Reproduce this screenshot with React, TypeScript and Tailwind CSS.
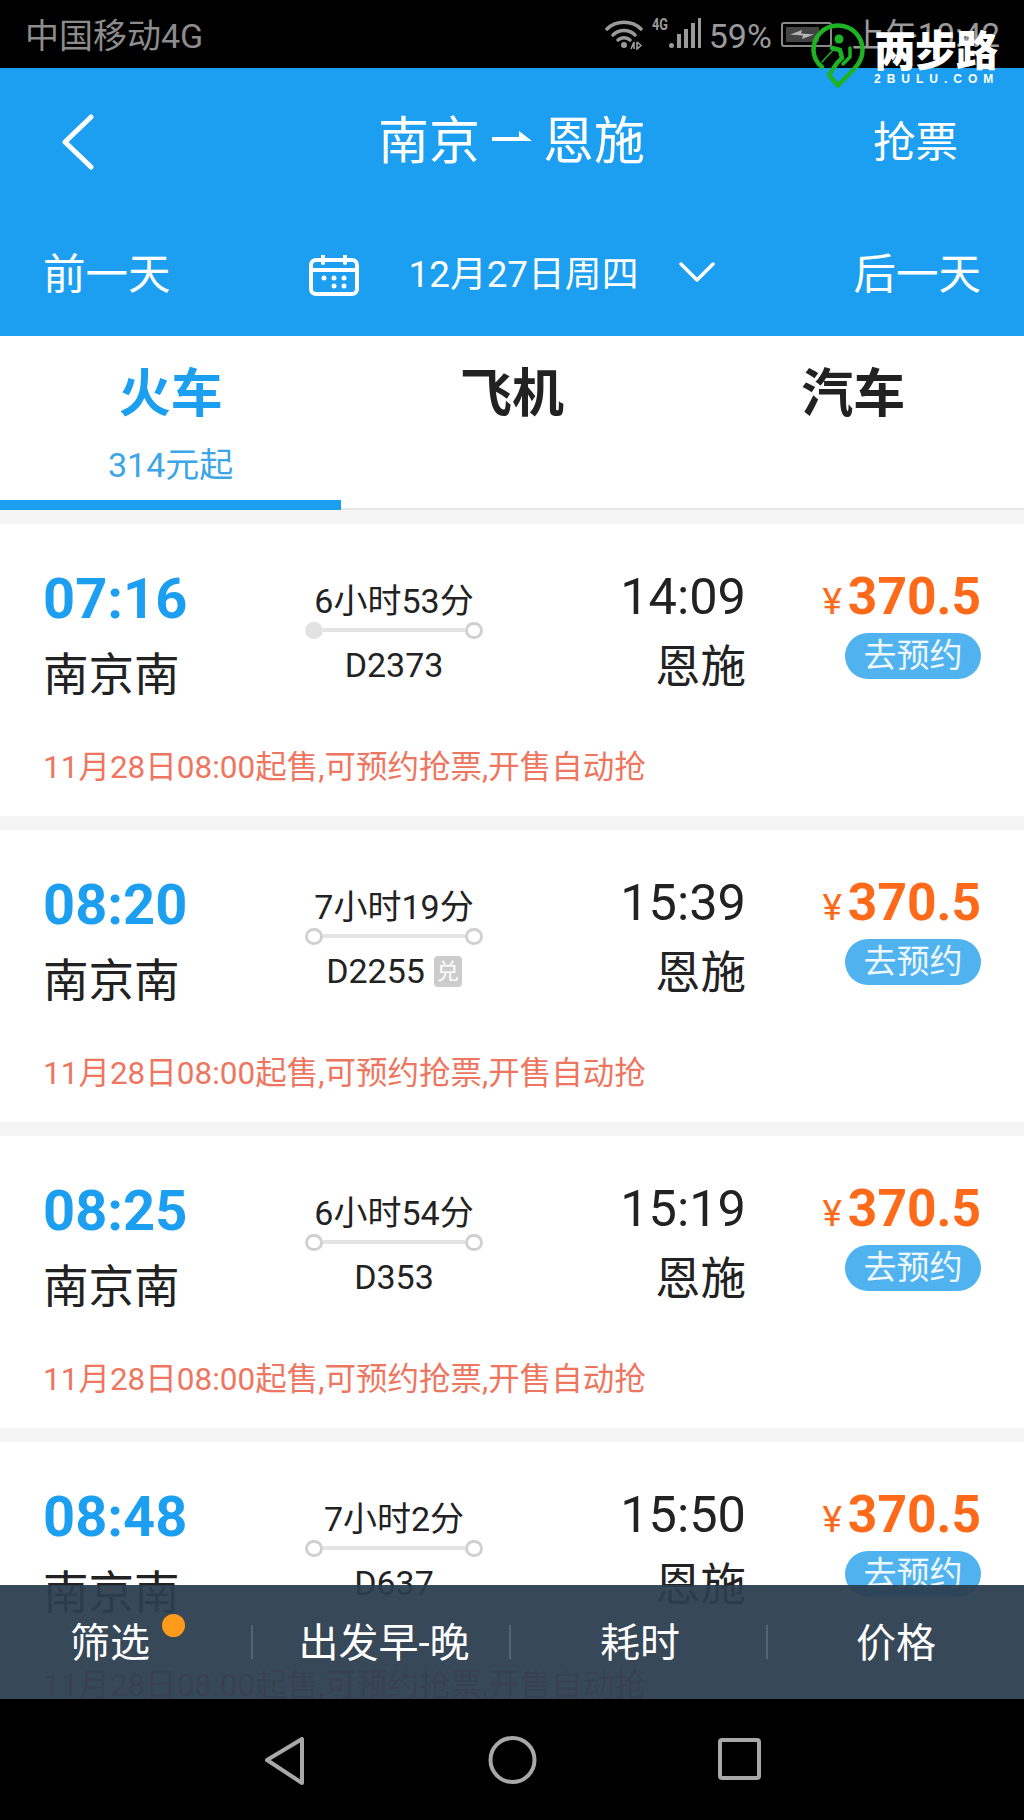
const cjk = "font-['Roboto','Noto_Sans_CJK_SC',sans-serif]";

type Train = { dep: string; dur: string; code: string; arr: string; filled?: boolean; badge?: boolean };

const trains: Train[] = [
  { dep: '07:16', dur: '6小时53分', code: 'D2373', arr: '14:09', filled: true },
  { dep: '08:20', dur: '7小时19分', code: 'D2255', arr: '15:39', badge: true },
  { dep: '08:25', dur: '6小时54分', code: 'D353', arr: '15:19' },
  { dep: '08:48', dur: '7小时2分', code: 'D637', arr: '15:50' },
];

function TrainCard({ t }: { t: Train }) {
  return (
    <div className="bg-white h-[292px] shrink-0 pt-[45px] pl-[43px] pr-[43px]">
      <div className="flex h-[139px]">
        <div className="w-[262px]">
          <div className="text-[56px] leading-[60px] font-bold text-[#1c9ff0]">{t.dep}</div>
          <div className="text-[45.5px] leading-[50px] mt-[22px] text-[#222]">南京南</div>
        </div>
        <div className="w-[178px] flex flex-col items-center text-[#222]">
          <div className="text-[34px] leading-[40px] mt-[12px]">{t.dur}</div>
          <div className="w-[178px] h-[18px] flex items-center">
            <span className={`w-[18px] h-[17px] rounded-full border-[3px] ${t.filled ? 'bg-[#e2e2e2] border-[#e2e2e2]' : 'bg-white border-[#d0d0d0]'}`} />
            <span className="flex-1 h-[4px] bg-[#e4e4e4]" />
            <span className="w-[18px] h-[17px] rounded-full border-[3px] border-[#d0d0d0] bg-white" />
          </div>
          <div className="flex items-center gap-[9px] h-[40px] mt-[6px]">
            <span className="text-[34px] leading-[40px]">{t.code}</span>
            {t.badge && (
              <span className="w-[28px] h-[31px] rounded-[4px] bg-[#cccccc] text-white text-[22px] leading-[31px] text-center">兑</span>
            )}
          </div>
        </div>
        <div className="w-[263px] flex flex-col items-end">
          <div className="text-[50.5px] leading-[60px] text-[#222] -mt-[2px]">{t.arr}</div>
          <div className="text-[45.5px] leading-[50px] text-[#222] mt-[16px]">恩施</div>
        </div>
        <div className="flex-1 flex flex-col items-end">
          <div className="flex items-baseline leading-[60px] -mt-[2px] text-[#ff6a1a]">
            <span className="text-[37px] font-normal mr-[6px]">¥</span>
            <span className="text-[51.5px] font-bold">370.5</span>
          </div>
          <div className="w-[136px] h-[46px] mt-[1px] rounded-full bg-[#50b3ef] text-white/90 text-[33px] leading-[46px] text-center">去预约</div>
        </div>
      </div>
      <div className="text-[31.5px] leading-[40px] text-[#ee7660] mt-[40px] whitespace-nowrap">11月28日08:00起售,可预约抢票,开售自动抢</div>
    </div>
  );
}

function StatusIcons() {
  return (
    <div className="flex items-start">
      <svg width="38" height="32" viewBox="0 0 38 32" fill="none" className="mt-[18px]" stroke="#9a9a9a">
        <path d="M2 11C11 2 27 2 36 11" strokeWidth="3.5" strokeLinecap="round" />
        <path d="M8 17C14 11 24 11 30 17" strokeWidth="3.5" strokeLinecap="round" />
        <path d="M13 22C16 19 22 19 25 22" strokeWidth="3.5" strokeLinecap="round" />
        <circle cx="19" cy="27" r="3" fill="#9a9a9a" stroke="none" />
        <path d="M26 31L29 24V31M32 24V31L36 27.5L32 24" strokeWidth="1.6" />
      </svg>
      <span className="text-[17px] leading-[15px] font-bold text-[#9a9a9a] mt-[17px] ml-[9px] w-[18px] scale-x-75 origin-left">4G</span>
      <div className="flex items-end gap-[3px] mt-[18px] h-[30px] ml-[-1px]">
        <span className="w-[5px] h-[5px] rounded-full bg-[#9a9a9a]" />
        <span className="w-[4px] h-[14px] bg-[#9a9a9a]" />
        <span className="w-[4px] h-[19px] bg-[#9a9a9a]" />
        <span className="w-[4px] h-[25px] bg-[#9a9a9a]" />
        <span className="w-[3px] h-[30px] bg-[#9a9a9a]" />
      </div>
      <span className="text-[34px] leading-[40px] text-[#9a9a9a] mt-[16px] ml-[8px]">59%</span>
      <div className="w-[51px] h-[25px] mt-[22px] ml-[9px] rounded-[3px] border-2 border-[#8a8a8a] p-[3px]">
        <div className="w-[33px] h-full bg-[#444] flex items-center justify-center">
          <svg width="26" height="13" viewBox="0 0 26 13"><path d="M1 6.5L13 2L12 5.5L25 6.5L13 11L14 7.5Z" fill="#b5b5b5" /></svg>
        </div>
      </div>
      <span className="text-[33px] leading-[40px] text-[#9a9a9a] mt-[16px] ml-[20px] whitespace-nowrap">上午10:42</span>
    </div>
  );
}

function Watermark() {
  return (
    <div className="absolute left-[805px] top-[20px] flex">
      <svg width="70" height="72" viewBox="0 0 70 72" fill="none" stroke="#1db322" strokeLinecap="round" strokeLinejoin="round">
        <path d="M17 47C11 42 8.5 36 8.5 30C8.5 16 19.5 5.5 33 5.5C46.5 5.5 57.5 16 57.5 30C57.5 38 54 44 49 49L33 65.5L24 55L32 43L37 38L35 30L27 28" strokeWidth="4.5" />
        <circle cx="34" cy="19" r="4.5" fill="#1db322" stroke="none" />
        <path d="M45 28V37L38 44" strokeWidth="3.5" />
        <path d="M17 42L30 28" strokeWidth="1.5" />
      </svg>
      <div className="absolute left-[69px] top-[7px] w-[126px] text-white">
        <div className="text-[42px] leading-[42px] font-black tracking-[-1px] whitespace-nowrap font-['Noto_Sans_CJK_SC',sans-serif]">两步路</div>
        <div className="text-[12px] leading-[12px] mt-[4px] font-bold tracking-[6px] whitespace-nowrap font-['Liberation_Sans',sans-serif]">2BULU.COM</div>
      </div>
    </div>
  );
}

export default function App() {
  return (
    <div className={`relative w-[1024px] h-[1820px] overflow-hidden flex flex-col bg-[#f5f5f5] ${cjk}`}>
      <div className="h-[68px] shrink-0 bg-black flex justify-between pl-[25px] pr-[24px]">
        <span className="text-[34px] leading-[40px] text-[#8c8c8c] mt-[16px] whitespace-nowrap">中国移动4G</span>
        <StatusIcons />
      </div>

      <div className="h-[268px] shrink-0 bg-[#1c9ff0] text-white px-[43px] pt-[49px]">
        <div className="flex items-center justify-between h-[50px] relative">
          <svg width="36" height="56" viewBox="0 0 36 56" fill="none" className="ml-[17px]" stroke="white" strokeWidth="5" strokeLinecap="round" strokeLinejoin="round">
            <path d="M31 3L5 28L31 53" />
          </svg>
          <div className="flex items-center text-[51px] leading-[60px] absolute left-[335px] top-[-5px]">
            <span>南京</span>
            <svg width="41" height="12" viewBox="0 0 41 12" className="mx-[11px] mt-[-10px]"><path d="M1 6H28L28 0L41 10H1Z" fill="white" /></svg>
            <span>恩施</span>
          </div>
          <span className="text-[42.5px] leading-[50px] mr-[23px] mt-[2px]">抢票</span>
        </div>
        <div className="flex items-center justify-between mt-[83px] h-[50px]">
          <span className="text-[42.5px] leading-[50px]">前一天</span>
          <div className="flex items-center">
            <svg width="50" height="41" viewBox="0 0 50 41" fill="none" stroke="white" strokeWidth="4" strokeLinecap="round">
              <rect x="2" y="5" width="46" height="34" rx="5" />
              <path d="M2 15H48M14 1V8M36 1V8" />
              <g fill="white" stroke="none">
                <circle cx="15" cy="23" r="2.5" /><circle cx="25" cy="23" r="2.5" /><circle cx="35" cy="23" r="2.5" />
                <circle cx="25" cy="31" r="2.5" /><circle cx="35" cy="31" r="2.5" />
              </g>
            </svg>
            <span className="text-[36.8px] leading-[50px] ml-[50px] whitespace-nowrap">12月27日周四</span>
            <svg width="36" height="20" viewBox="0 0 36 20" fill="none" stroke="white" strokeWidth="3.5" strokeLinecap="round" strokeLinejoin="round" className="ml-[41px] mb-[6px]">
              <path d="M2 2L18 18L34 2" />
            </svg>
          </div>
          <span className="text-[42.5px] leading-[50px]">后一天</span>
        </div>
      </div>

      <div className="relative h-[174px] shrink-0 bg-white border-b-2 border-[#e6e6e6] grid grid-cols-3 text-center">
        <div className="text-[#1c9ff0]">
          <div className="text-[52px] leading-[60px] font-bold mt-[29px]">火车</div>
          <div className="text-[34px] leading-[40px] text-[#3ba6e8] mt-[20px]">314元起</div>
        </div>
        <div className="text-[52px] leading-[60px] font-bold text-[#222] mt-[29px]">飞机</div>
        <div className="text-[52px] leading-[60px] font-bold text-[#222] mt-[29px]">汽车</div>
        <div className="absolute left-0 -bottom-[2px] w-[341px] h-[10px] bg-[#1c9ff0]" />
      </div>

      <div className="relative flex-1 min-h-0 overflow-hidden pt-[14px]">
        <div className="flex flex-col gap-[14px]">
          {trains.map((t) => (
            <TrainCard key={t.dep} t={t} />
          ))}
        </div>
        <div className="absolute left-0 right-0 bottom-0 h-[114px] bg-[#2c3e50]/95 grid grid-cols-4 items-center text-white text-[40px] leading-[50px] text-center pt-[4px]">
          <div className="relative flex justify-center items-center">
            <span className="relative pr-[36px]">
              筛选
              <span className="absolute right-[1px] top-[-5px] w-[23px] h-[23px] rounded-full bg-[#ff9a1a]" />
            </span>
            <span className="absolute right-[3px] top-[6px] w-[2px] h-[34px] bg-[#566472]" />
          </div>
          <div className="relative">
            出发早-晚
            <span className="absolute right-[1px] top-[6px] w-[2px] h-[34px] bg-[#566472]" />
          </div>
          <div className="relative">
            耗时
            <span className="absolute right-[0px] top-[6px] w-[2px] h-[34px] bg-[#566472]" />
          </div>
          <div>价格</div>
        </div>
      </div>

      <div className="h-[121px] shrink-0 bg-black flex items-center">
        <svg width="1024" height="121" viewBox="0 0 1024 121" fill="none" stroke="#a8a8a8" strokeWidth="4" strokeLinejoin="round">
          <path d="M302 40V84L267 61Z" />
          <ellipse cx="512.5" cy="61" rx="22" ry="22" />
          <rect x="720" y="41" width="39" height="38" rx="2" />
        </svg>
      </div>

      <Watermark />
    </div>
  );
}
